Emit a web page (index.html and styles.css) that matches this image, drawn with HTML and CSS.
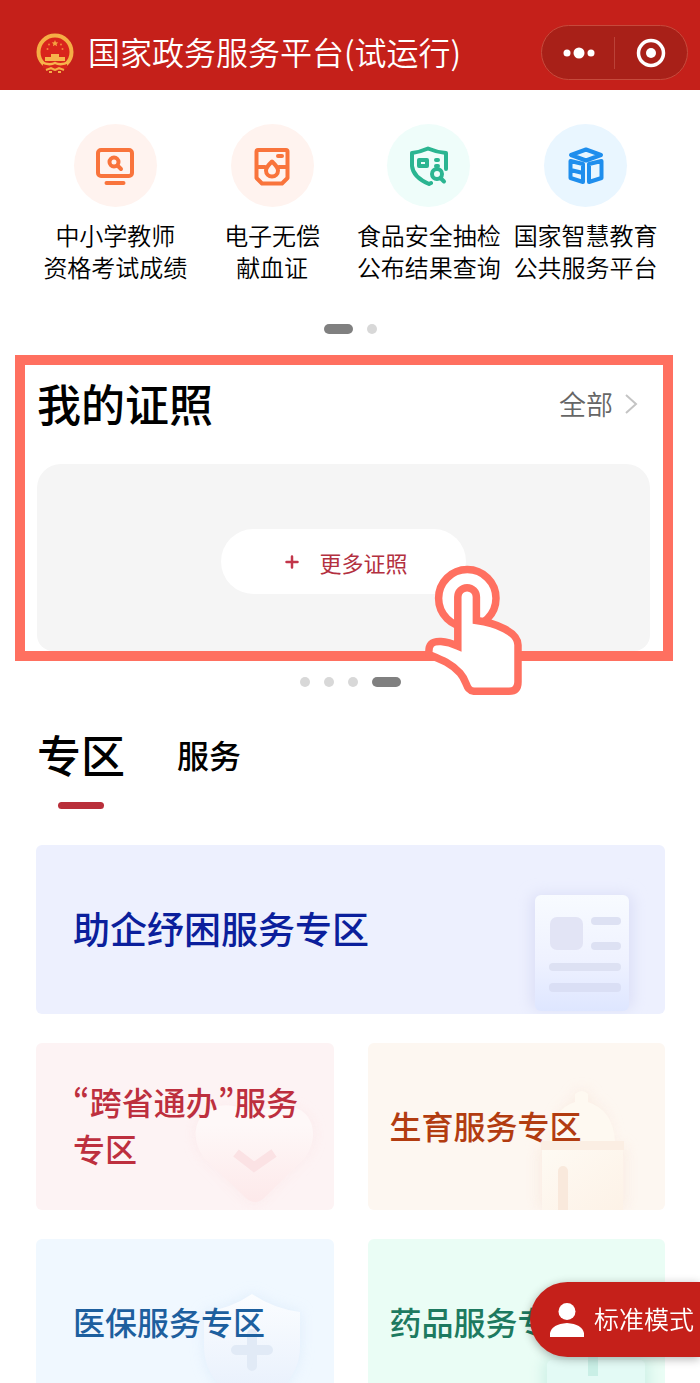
FILE: index.html
```html
<!DOCTYPE html>
<html lang="zh-CN">
<head>
    <meta charset="UTF-8">
    <meta name="viewport" content="width=device-width, initial-scale=1.0">
    <title>国家政务服务平台</title>
    <link rel="stylesheet" href="styles.css">
</head>
<body>
    <div class="app">
        <header class="topbar">
            <svg class="emblem" viewBox="0 0 38 40">
                <circle cx="19" cy="19" r="16.5" fill="#d9251c" stroke="#f5ae45" stroke-width="4"></circle>
                <path d="M19 7l1 2.2 2.3.2-1.7 1.6.5 2.3-2.1-1.2-2.1 1.2.5-2.3-1.7-1.6 2.3-.2z" fill="#f5a040"></path>
                <g fill="#f08a3a">
                    <circle cx="13" cy="11.5" r="1"></circle>
                    <circle cx="25" cy="11.5" r="1"></circle>
                    <circle cx="11.5" cy="16" r="1"></circle>
                    <circle cx="26.5" cy="16" r="1"></circle>
                </g>
                <path d="M15 21h8v3h6v4H9v-4h6z" fill="#f7b44c"></path>
                <path d="M7 31h24v4q-12 4-24 0z" fill="#d9251c"></path>
                <path d="M5 29q8 4 14 1 6 3 14-1" fill="none" stroke="#f7b44c" stroke-width="2.5"></path>
                <path d="M10 37l5-2 4 2 4-2 5 2M13 39h3M22 39h3" fill="none" stroke="#f5ae45" stroke-width="2"></path>
            </svg>
            <h1>国家政务服务平台(试运行)</h1>
            <div class="capsule">
                <button type="button" aria-label="更多">
                    <svg width="34" height="14" viewBox="0 0 34 14" fill="#fff">
                        <circle cx="6" cy="7" r="3.5"></circle>
                        <circle cx="18" cy="7" r="5.5"></circle>
                        <circle cx="30" cy="7" r="3.5"></circle>
                    </svg>
                </button>
                <button type="button" aria-label="关闭">
                    <svg width="30" height="30" viewBox="0 0 30 30">
                        <circle cx="15" cy="15" r="12.5" fill="none" stroke="#fff" stroke-width="3.5"></circle>
                        <circle cx="15" cy="15" r="5" fill="#fff"></circle>
                    </svg>
                </button>
            </div>
        </header>

        <main>
            <nav class="shortcuts">
                <a href="#">
                    <span class="round orange">
                        <svg viewBox="0 0 40 40" stroke="#f9743c">
                            <rect x="3" y="4" width="34" height="26" rx="3"></rect>
                            <circle cx="19" cy="16" r="4.5"></circle>
                            <path d="M22.5 19.500l3.5 3.5M11.5 37h17"></path>
                        </svg>
                    </span>
                    中小学教师<br>资格考试成绩
                </a>
                <a href="#">
                    <span class="round orange">
                        <svg viewBox="0 0 40 40" stroke="#f9743c">
                            <path d="M6 4h28a1.5 1.5 0 0 1 1.500 1.500V32L30 37.500H10L4.500 32V5.500A1.500 1.500 0 0 1 6 4zM4.500 21H13M27 21h8.500M26 10h4"></path>
                            <path d="M20 15.500c4 4 6 6 6 9a6 6 0 0 1-12 0c0-3 2-5 6-9z"></path>
                        </svg>
                    </span>
                    电子无偿<br>献血证
                </a>
                <a href="#">
                    <span class="round green">
                        <svg viewBox="0 0 40 40" stroke="#2bb591">
                            <path d="M37 23V7Q27 6 19 2.500Q11 6 3 7v13q1 11 17 18l2-1"></path>
                            <rect x="10" y="14" width="8" height="6"></rect>
                            <path d="M27 14h2M27 20h2"></path>
                            <circle cx="28" cy="28" r="5"></circle>
                            <path d="M31.500 32l3.500 3.500"></path>
                        </svg>
                    </span>
                    食品安全抽检<br>公布结果查询
                </a>
                <a href="#">
                    <span class="round blue">
                        <svg viewBox="0 0 40 40" stroke="#1f8eed">
                            <path d="M20 3.500l15 5.500-15 5.500L5 9zM4.500 15L17 18v18L4.500 32zM4.500 24L17 27M35.500 15L23 18v18l12.500-4z"></path>
                        </svg>
                    </span>
                    国家智慧教育<br>公共服务平台
                </a>
            </nav>
            <div class="dots">
                <i class="active"></i><i></i>
            </div>

            <section class="licenses">
                <div class="licenses-head">
                    <h2>我的证照</h2>
                    <a href="#">全部
                        <svg width="14" height="22" viewBox="0 0 14 22" fill="none" stroke="#c4c4c4" stroke-width="2">
                            <path d="M2 2l10 9-10 9"></path>
                        </svg>
                    </a>
                </div>
                <div class="licenses-body">
                    <div class="add-wrap">
                        <button type="button" class="add">
                            <svg width="14" height="14" viewBox="0 0 14 14" stroke="#c2364a" stroke-width="2.5" stroke-linecap="round">
                                <path d="M7 1.500v11M1.500 7h11"></path>
                            </svg>
                            更多证照
                        </button>
                        <svg class="hand" viewBox="0 0 100 132" fill="#fff" stroke="#ff7060" stroke-width="7.5">
                            <circle cx="43.3" cy="34.3" r="28.7"></circle>
                            <path d="M33.800 81V33a9.300 9.300 0 0 1 18.600 0V56.500C72 59 94 68 94 81V118Q94 127.300 85 127.300H50C41 126 44 118 36 109C27 99 16 95 5 90.500C4 80 8 77 17 77.500Q25 78 33.800 82z"></path>
                        </svg>
                    </div>
                </div>
            </section>
            <div class="dots">
                <i></i><i></i><i></i><i class="active"></i>
            </div>

            <div class="tabs">
                <button type="button" class="current">专区</button>
                <button type="button">服务</button>
            </div>

            <div class="zones">
                <a href="#" class="zone wide indigo">
                    <svg class="art" viewBox="0 0 150 150">
                        <defs>
                            <linearGradient id="doc" x1="0" y1="0" x2="0" y2="1">
                                <stop offset="0" stop-color="#f8fbff"></stop>
                                <stop offset="0.55" stop-color="#eff2ff"></stop>
                                <stop offset="1" stop-color="#dee6ff"></stop>
                            </linearGradient>
                            <filter id="soft" x="-30%" y="-30%" width="160%" height="160%">
                                <feGaussianBlur stdDeviation="7"></feGaussianBlur>
                            </filter>
                        </defs>
                        <rect x="16" y="30" width="102" height="116" rx="8" fill="#dcdff7" filter="url(#soft)"></rect>
                        <rect x="20" y="31" width="94" height="116" rx="6" fill="url(#doc)"></rect>
                        <g fill="#dde1f3">
                            <rect x="35" y="53" width="33" height="33" rx="7" fill="#e2e4f5"></rect>
                            <rect x="76" y="53" width="30" height="8" rx="4"></rect>
                            <rect x="76" y="78" width="30" height="8" rx="4"></rect>
                            <rect x="34" y="99" width="72" height="8" rx="4"></rect>
                            <rect x="34" y="119" width="72" height="9" rx="4" fill="#dadff5"></rect>
                        </g>
                    </svg>
                    <span>助企纾困服务专区</span>
                </a>
                <a href="#" class="zone left rose">
                    <svg class="art" viewBox="0 0 150 150">
                        <defs>
                            <linearGradient id="heart" x1="0" y1="0" x2="0" y2="1">
                                <stop offset="0.2" stop-color="#fef8f8"></stop>
                                <stop offset="1" stop-color="#fde9ea"></stop>
                            </linearGradient>
                        </defs>
                        <path d="M70 144L22 97C-3 67 24 32 70 58C116 32 143 67 119 97z" fill="#fbe3e4" filter="url(#soft)" opacity="0.6"></path>
                        <path d="M62 138L20 98C0 70 18 40 50 46Q62 48 70 56Q78 48 90 46C124 40 140 70 121 98L80 138Q71 146 62 138z" fill="url(#heart)"></path>
                        <path d="M52 93l18 14 20-14" fill="none" stroke="#fbe2e4" stroke-width="9"></path>
                    </svg>
                    <span><span class="quote">“</span>跨省通办<span class="quote">”</span>服务<br>专区</span>
                </a>
                <a href="#" class="zone amber">
                    <svg class="art" viewBox="0 0 150 150">
                        <defs>
                            <linearGradient id="bottle" x1="0" y1="0" x2="1" y2="1">
                                <stop offset="0" stop-color="#fefaf3"></stop>
                                <stop offset="1" stop-color="#fdf2e7"></stop>
                            </linearGradient>
                        </defs>
                        <path d="M24 150V86h14q2-40 22-44V32h14v10q22 6 22 44h14v64z" fill="#f9e5d9" filter="url(#soft)" opacity="0.6"></path>
                        <path d="M35 81Q37 49 60 42V34q7-6 13 0v8q25 8 27 39z" fill="#fef9f1"></path>
                        <path d="M26 81h83v9H26z" fill="#fbeee3"></path>
                        <path d="M27 90h81v60H27z" fill="url(#bottle)"></path>
                        <path d="M43 150v-39a5 5 0 0 1 10 0v39z" fill="#f9e9dc"></path>
                    </svg>
                    <span>生育服务专区</span>
                </a>
                <a href="#" class="zone left sky">
                    <svg class="art" viewBox="0 0 150 150">
                        <defs>
                            <linearGradient id="shield" x1="0" y1="0" x2="0" y2="1">
                                <stop offset="0" stop-color="#fbfdff"></stop>
                                <stop offset="1" stop-color="#e6effc"></stop>
                            </linearGradient>
                        </defs>
                        <path d="M68 38Q90 53 116 56V90Q116 130 68 150Q20 130 20 90V56Q46 53 68 38z" fill="#dbeafa" filter="url(#soft)" opacity="0.8"></path>
                        <path d="M68 38Q90 53 116 56V90Q116 130 68 150Q20 130 20 90V56Q46 53 68 38z" fill="url(#shield)"></path>
                        <path d="M68 78v32M52 94h32" stroke="#e1eaf6" stroke-width="10" stroke-linecap="round"></path>
                    </svg>
                    <span>医保服务专区</span>
                </a>
                <a href="#" class="zone mint">
                    <svg class="art" viewBox="0 0 150 150">
                        <rect x="28" y="102" width="106" height="60" rx="6" fill="#cdf0e6" filter="url(#soft)"></rect>
                        <rect x="32" y="104" width="98" height="60" rx="5" fill="#e3faf5"></rect>
                        <path d="M78 100v20" stroke="#c9efe6" stroke-width="10"></path>
                    </svg>
                    <span>药品服务专区</span>
                </a>
            </div>
        </main>

        <button type="button" class="mode">
            <svg width="34" height="34" viewBox="0 0 34 34" fill="#fff">
                <circle cx="17" cy="8.5" r="8.5"></circle>
                <path d="M0 34v-4q2-9 17-10 15 1 17 10v4z"></path>
            </svg>
            <span>标准模式</span>
        </button>
    </div>
</body>
</html>
```
FILE: styles.css
```css
* {
  margin: 0;
  padding: 0;
  box-sizing: border-box;
}

body {
  font-family: "Noto Sans CJK SC", "Liberation Sans", sans-serif;
  background-color: #fff;
  color: #000;
}

a {
  color: inherit;
  text-decoration: none;
}

button {
  font-family: inherit;
  background: none;
  border: none;
  cursor: pointer;
}

svg {
  display: block;
  flex-shrink: 0;
}

.app {
  height: 100vh;
  overflow-x: hidden;
  overflow-y: auto;
  scrollbar-width: none;
}

/* top bar */
.topbar {
  display: flex;
  align-items: center;
  height: 90px;
  padding: 15px 12px 0 36px;
  background-color: #c5201a;
  color: #fff;
}

.emblem {
  width: 38px;
  height: 40px;
  margin-right: 14px;
}

.topbar h1 {
  padding-bottom: 3px;
  font-size: 32px;
  font-weight: 350;
  line-height: 40px;
  white-space: nowrap;
}

.capsule {
  display: flex;
  align-items: center;
  width: 147px;
  height: 55px;
  margin-left: auto;
  border: 1px solid #c64a3c;
  border-radius: 28px;
  background-color: #a82018;
}

.capsule button {
  display: flex;
  flex: 1;
  justify-content: center;
  align-items: center;
  height: 32px;
}

.capsule button + button {
  border-left: 1px solid #bb4238;
}

/* shortcuts */
.shortcuts {
  display: grid;
  grid-template-columns: repeat(4, 1fr);
  padding: 34px 36px 0 37px;
}

.shortcuts a {
  font-size: 24px;
  font-weight: 350;
  line-height: 32px;
  text-align: center;
  white-space: nowrap;
}

.round {
  display: flex;
  justify-content: center;
  align-items: center;
  width: 83px;
  height: 83px;
  margin: 0 auto 12px;
  border-radius: 50%;
}

.round svg {
  width: 40px;
  height: 40px;
  fill: none;
  stroke-width: 4;
  stroke-linecap: round;
  stroke-linejoin: round;
}

.orange {
  background-color: #fff3ef;
}

.green {
  background-color: #effdfa;
}

.blue {
  background-color: #e9f6ff;
}

.dots {
  display: flex;
  justify-content: center;
  gap: 14px;
  padding: 16px 0;
}

.dots i {
  width: 10px;
  height: 10px;
  border-radius: 5px;
  background-color: #d8d8d8;
}

.dots .active {
  width: 29px;
  background-color: #808080;
}

.shortcuts + .dots {
  padding: 41px 0 21px;
}

/* licenses */
.licenses {
  margin: 0 27px 0 15px;
  border: 10px solid #ff7060;
}

.licenses-head {
  display: flex;
  justify-content: space-between;
  align-items: center;
  height: 99px;
  padding: 0 25px 22px 12px;
}

.licenses h2 {
  padding-bottom: 2px;
  font-size: 44px;
  font-weight: 500;
  line-height: 56px;
}

.licenses-head a {
  display: flex;
  align-items: center;
  gap: 11px;
  font-size: 27px;
  font-weight: 350;
  color: #666;
}

.licenses-body {
  display: flex;
  justify-content: center;
  align-items: center;
  height: 187px;
  margin: 0 13px 0 12px;
  padding-top: 8px;
  border-radius: 24px 24px 16px 16px;
  background-color: #f5f5f5;
}

.add-wrap {
  position: relative;
}

.add {
  display: flex;
  justify-content: center;
  align-items: center;
  gap: 20px;
  width: 245px;
  height: 65px;
  padding-left: 6px;
  border-radius: 33px;
  background-color: #fff;
  font-size: 22px;
  color: #b3303f;
}

/* sits over the button and the frame */
.hand {
  position: absolute;
  top: 35px;
  left: 203px;
  width: 100px;
  height: 132px;
}

/* tabs */
.tabs {
  display: flex;
  align-items: center;
  gap: 52px;
  padding: 21px 37px 36px;
}

.tabs button {
  position: relative;
  height: 85px;
  padding-bottom: 25px;
  font-size: 32px;
  font-weight: 500;
  line-height: 60px;
}

.tabs .current {
  font-size: 44px;
}

.current::after {
  content: '';
  position: absolute;
  bottom: 0;
  left: 50%;
  width: 46px;
  height: 7px;
  margin-left: -23px;
  border-radius: 4px;
  background-color: #b92f3a;
}

/* zones */
.zones {
  display: grid;
  grid-template-columns: 1fr 1fr;
  gap: 29px 34px;
  padding: 0 35px 32px 36px;
}

.zone {
  position: relative;
  display: flex;
  align-items: center;
  height: 167px;
  padding: 0 0 3px 22px;
  border-radius: 6px;
  overflow: hidden;
  font-size: 32px;
  font-weight: 500;
  line-height: 47px;
}

.zone > span {
  position: relative;
  white-space: nowrap;
}

.left,
.wide {
  padding-left: 37px;
}

.wide {
  grid-column: 1 / 3;
  height: 169px;
  font-size: 37px;
}

.art {
  position: absolute;
  right: 0;
  bottom: 0;
  width: 150px;
  height: 150px;
}

.quote {
  font-feature-settings: "pwid";
}

.indigo {
  background-color: #edf0fe;
  color: #0b1f9c;
}

.rose {
  background-color: #fdf3f4;
  color: #bd2f3e;
}

.amber {
  background-color: #fdf7f1;
  color: #b23c10;
}

.sky {
  background-color: #f0f8ff;
  color: #1d5f9e;
}

.mint {
  background-color: #eafdf5;
  color: #1d7a60;
}

/* floating mode switch */
.mode {
  position: fixed;
  right: 0;
  bottom: 26px;
  display: flex;
  align-items: center;
  gap: 10px;
  height: 75px;
  padding: 0 6px 0 20px;
  border-radius: 38px 0 0 38px;
  background-color: #c5201a;
  box-shadow: 0 2px 10px rgba(0, 0, 0, 0.3);
  font-size: 25px;
  font-weight: 350;
  color: #fff;
}

.mode span {
  padding-bottom: 3px;
}
```
